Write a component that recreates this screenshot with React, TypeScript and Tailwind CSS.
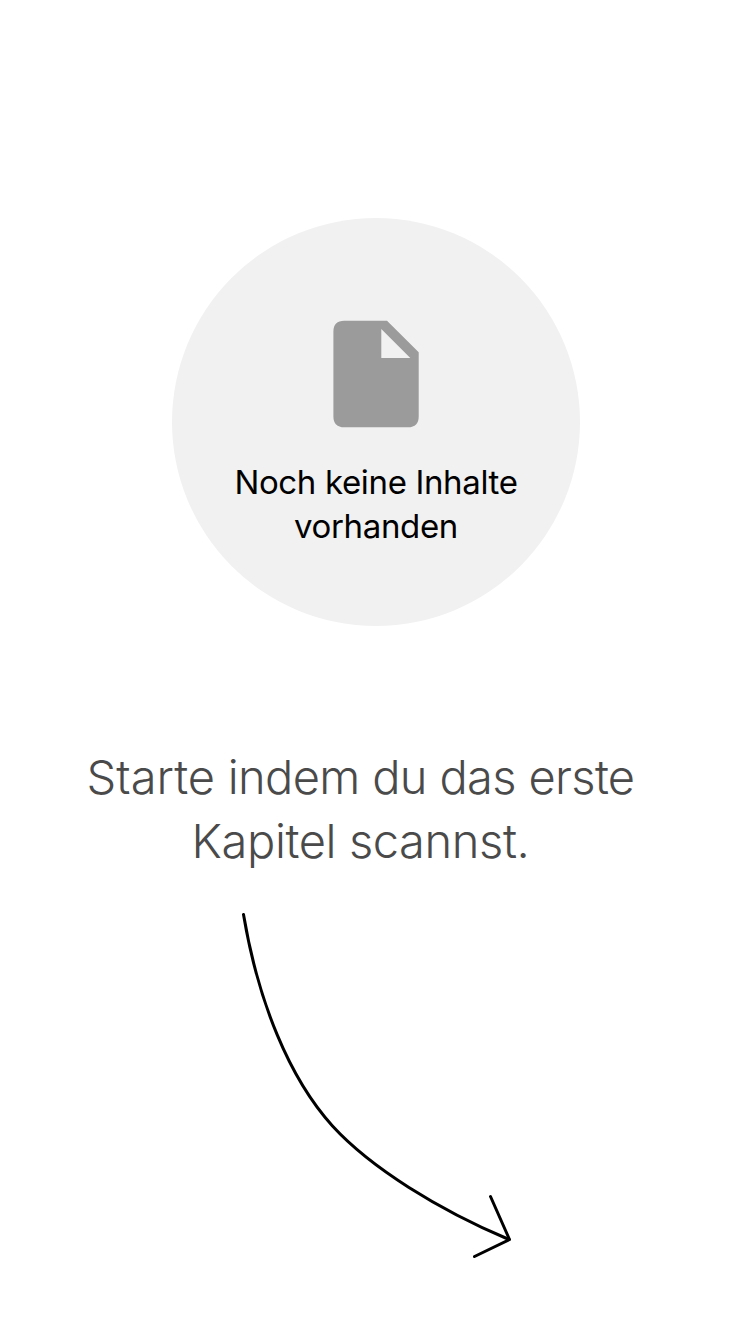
export default function App() {
  return (
    <main className="flex h-[1334px] w-[750px] flex-col overflow-hidden bg-white pt-[218px] font-['Inter',sans-serif]">
      <section className="ml-[172px] flex size-[408px] flex-col items-center rounded-full bg-[#f1f1f1] pt-[102px]">
        <svg className="h-[108px] w-[86px]" viewBox="0 0 86 108" fill="#9b9b9b">
          <path fillRule="evenodd" d="M11.300 .7H54L85.700 32.300V96.500Q85.700 107.300 75 107.300H11.300Q.4 107.300 .4 96.500V11.500Q.4 .7 11.300 .7ZM48.300 9V38H77.300Z" />
        </svg>
        <p className="mt-[32px] text-center text-[33px] leading-[44px] tracking-[-0.35px] whitespace-nowrap text-black">
          Noch keine Inhalte<br />vorhanden
        </p>
      </section>
      <h1 className="mt-[119px] w-[721px] text-center text-[47px] leading-[64px] font-light tracking-[-0.4px] whitespace-nowrap text-[#4a4a4a]">
        <span className="tracking-[0.05px]">Starte</span>
        <span className="tracking-[-0.65px]"> indem du das erste</span><br />Kapitel scannst.
      </h1>
      <svg className="mt-[27px] ml-[230px] h-[370px] w-[300px] shrink-0" viewBox="230 900 300 370" fill="none" stroke="black" strokeWidth="3" strokeLinecap="round" strokeLinejoin="round">
        <path d="M243.500 914.500C258 1001 289 1078 332.500 1126C371 1168 439 1210 509 1239.500" />
        <path d="M490.500 1196.500L509.500 1239.500L474.500 1256.500" />
      </svg>
    </main>
  );
}
